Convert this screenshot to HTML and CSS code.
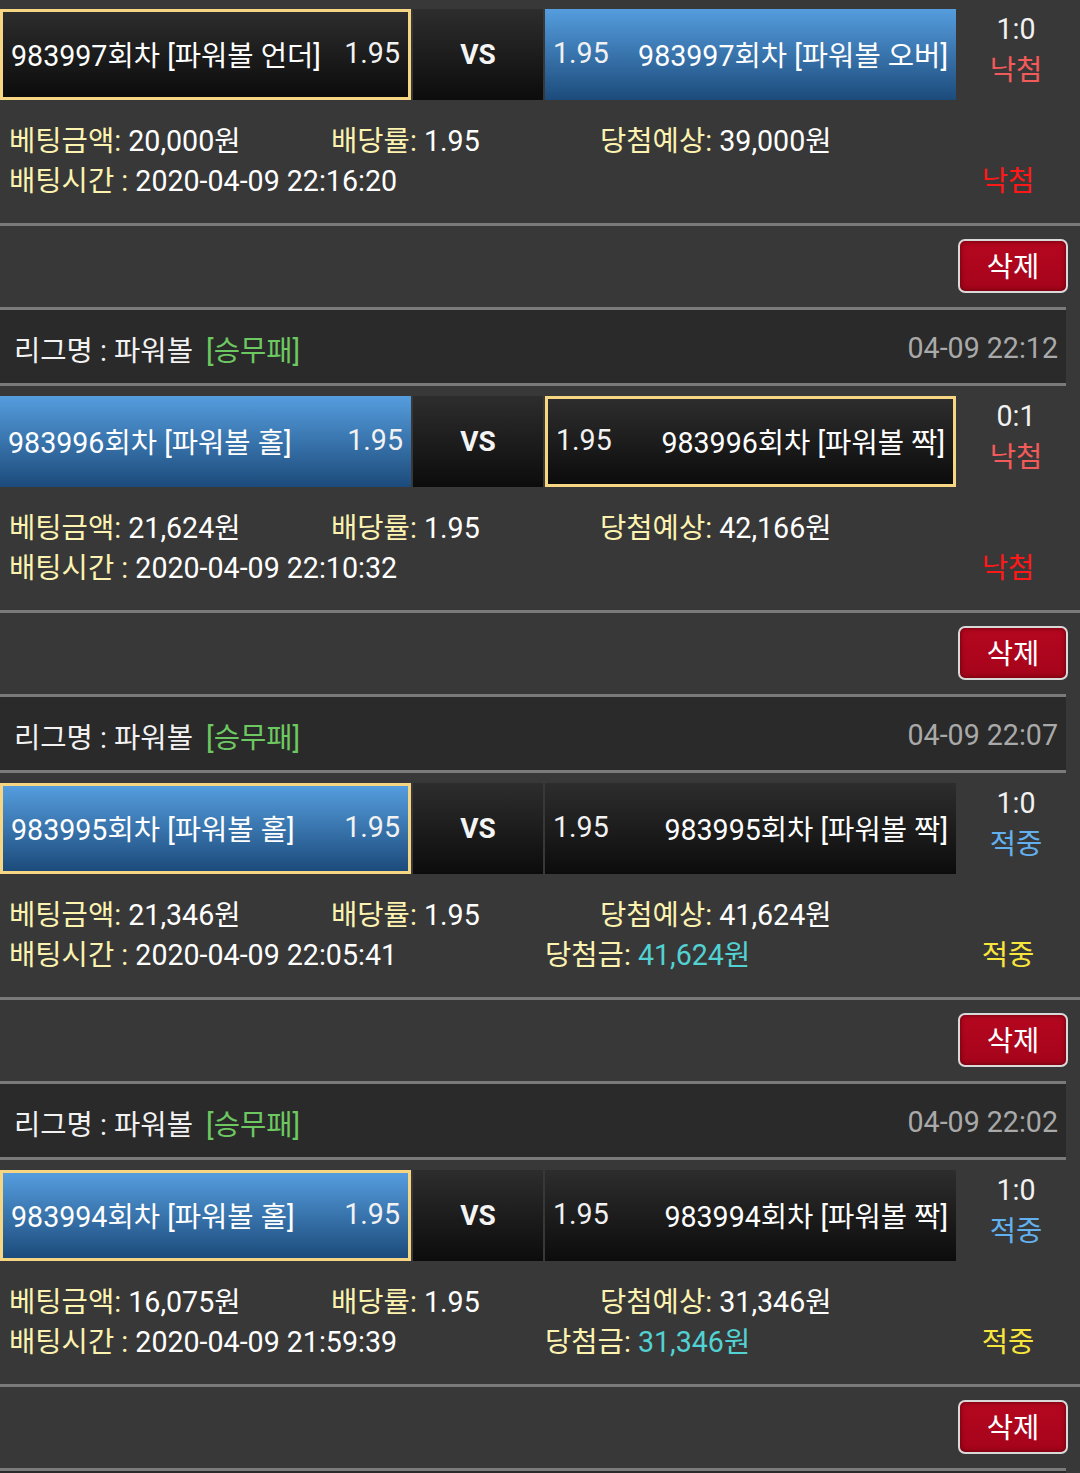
FILE: index.html
```html
<!DOCTYPE html>
<html lang="ko">
<head>
<meta charset="utf-8">
<title>베팅내역</title>
<link rel="stylesheet" href="styles.css">
</head>
<body>
<div class="page">

  <section class="block">
    <div class="bet">
      <div class="pick black selected"><span class="name">983997회차 [파워볼 언더]</span><span class="odds">1.95</span></div>
      <div class="vs">VS</div>
      <div class="pick blue"><span class="odds">1.95</span><span class="name">983997회차 [파워볼 오버]</span></div>
      <div class="score"><span>1:0</span><span class="lose">낙첨</span></div>
    </div>
    <div class="info">
      <div class="line1">
        <span><em>베팅금액:</em> 20,000원</span>
        <span><em>배당률:</em> 1.95</span>
        <span><em>당첨예상:</em> 39,000원</span>
      </div>
      <div class="line2">
        <span><em>배팅시간 :</em> 2020-04-09 22:16:20</span>
        <span></span>
        <span class="result lose-strong">낙첨</span>
      </div>
    </div>
    <div class="sep"></div>
    <div class="actions"><button class="del">삭제</button></div>
    <div class="league"><span>리그명 : 파워볼 <b>[승무패]</b></span><span class="time">04-09 22:12</span></div>
  </section>

  <section class="block">
    <div class="bet">
      <div class="pick blue"><span class="name">983996회차 [파워볼 홀]</span><span class="odds">1.95</span></div>
      <div class="vs">VS</div>
      <div class="pick black selected"><span class="odds">1.95</span><span class="name">983996회차 [파워볼 짝]</span></div>
      <div class="score"><span>0:1</span><span class="lose">낙첨</span></div>
    </div>
    <div class="info">
      <div class="line1">
        <span><em>베팅금액:</em> 21,624원</span>
        <span><em>배당률:</em> 1.95</span>
        <span><em>당첨예상:</em> 42,166원</span>
      </div>
      <div class="line2">
        <span><em>배팅시간 :</em> 2020-04-09 22:10:32</span>
        <span></span>
        <span class="result lose-strong">낙첨</span>
      </div>
    </div>
    <div class="sep"></div>
    <div class="actions"><button class="del">삭제</button></div>
    <div class="league"><span>리그명 : 파워볼 <b>[승무패]</b></span><span class="time">04-09 22:07</span></div>
  </section>

  <section class="block">
    <div class="bet">
      <div class="pick blue selected"><span class="name">983995회차 [파워볼 홀]</span><span class="odds">1.95</span></div>
      <div class="vs">VS</div>
      <div class="pick black"><span class="odds">1.95</span><span class="name">983995회차 [파워볼 짝]</span></div>
      <div class="score"><span>1:0</span><span class="win">적중</span></div>
    </div>
    <div class="info">
      <div class="line1">
        <span><em>베팅금액:</em> 21,346원</span>
        <span><em>배당률:</em> 1.95</span>
        <span><em>당첨예상:</em> 41,624원</span>
      </div>
      <div class="line2">
        <span><em>배팅시간 :</em> 2020-04-09 22:05:41</span>
        <span><em>당첨금:</em> <i>41,624원</i></span>
        <span class="result win-strong">적중</span>
      </div>
    </div>
    <div class="sep"></div>
    <div class="actions"><button class="del">삭제</button></div>
    <div class="league"><span>리그명 : 파워볼 <b>[승무패]</b></span><span class="time">04-09 22:02</span></div>
  </section>

  <section class="block">
    <div class="bet">
      <div class="pick blue selected"><span class="name">983994회차 [파워볼 홀]</span><span class="odds">1.95</span></div>
      <div class="vs">VS</div>
      <div class="pick black"><span class="odds">1.95</span><span class="name">983994회차 [파워볼 짝]</span></div>
      <div class="score"><span>1:0</span><span class="win">적중</span></div>
    </div>
    <div class="info">
      <div class="line1">
        <span><em>베팅금액:</em> 16,075원</span>
        <span><em>배당률:</em> 1.95</span>
        <span><em>당첨예상:</em> 31,346원</span>
      </div>
      <div class="line2">
        <span><em>배팅시간 :</em> 2020-04-09 21:59:39</span>
        <span><em>당첨금:</em> <i>31,346원</i></span>
        <span class="result win-strong">적중</span>
      </div>
    </div>
    <div class="sep"></div>
    <div class="actions"><button class="del">삭제</button></div>
    <div class="league empty"></div>
  </section>

</div>
</body>
</html>
```

FILE: styles.css
```css
html, body {
  margin: 0;
  padding: 0;
  background: #383838;
}

body {
  font-family: "Roboto", "Noto Sans CJK KR", sans-serif;
  font-size: 28.6px;
  color: #ffffff;
  overflow: hidden;
}

.page {
  padding-top: 9px;
}

.block {
  display: flex;
  flex-direction: column;
}

/* bet row */
.bet {
  display: grid;
  grid-template-columns: 411px 130px 411px 124px;
  column-gap: 2px;
  height: 91px;
}

.pick {
  box-sizing: border-box;
  height: 91px;
  padding: 0 8px 3px;
  display: flex;
  align-items: center;
  justify-content: space-between;
  white-space: nowrap;
  color: #ffffff;
}

.pick.black {
  background: linear-gradient(#2d2d2d, #0c0c0c);
}

.pick.blue {
  background: linear-gradient(#559dde, #1c4b7b);
}

.pick.selected {
  border: 3px solid #f6d683;
}

.odds {
  color: #f2f2f2;
}

.vs {
  background: linear-gradient(#2d2d2d, #0c0c0c);
  display: flex;
  align-items: center;
  justify-content: center;
  font-weight: 700;
  font-size: 28px;
  color: #f4f4f4;
}

.score {
  display: flex;
  flex-direction: column;
  align-items: center;
  line-height: 41px;
  margin-left: -2px;
  padding-right: 6px;
  color: #f2f2f2;
}

.score .lose {
  color: #f35a5a;
}

.score .win {
  color: #63b0ee;
}

/* info */
.info {
  height: 123px;
  box-sizing: border-box;
  padding: 21px 0 22px 9px;
  line-height: 40px;
  white-space: nowrap;
}

.info em {
  font-style: normal;
  color: #fdf3b0;
}

.info i {
  font-style: normal;
  color: #52d2d2;
}

.line1 {
  display: grid;
  grid-template-columns: 322px 269px 1fr;
}

.line2 {
  display: grid;
  grid-template-columns: 536px 1fr 144px;
}

.result {
  text-align: center;
}

.lose-strong {
  color: #ff1818;
}

.win-strong {
  color: #f8e63c;
}

.sep {
  height: 3px;
  background: #7a7a7a;
}

/* actions */
.actions {
  height: 81px;
  box-sizing: border-box;
  padding: 13px 12px 0 0;
  display: flex;
  justify-content: flex-end;
  align-items: flex-start;
}

.del {
  width: 110px;
  height: 54px;
  box-sizing: border-box;
  border: 2px solid #d9d9d9;
  border-radius: 7px;
  background: linear-gradient(#b5071f, #a5041b);
  box-shadow: inset 0 0 5px rgba(60, 0, 0, 0.7);
  color: #ffffff;
  font-family: "Roboto", "Noto Sans CJK KR", sans-serif;
  font-size: 28.6px;
  padding: 0 0 3px;
  cursor: pointer;
}

/* league header */
.league {
  width: 1066px;
  height: 79px;
  box-sizing: border-box;
  border-top: 3px solid #7a7a7a;
  border-bottom: 3px solid #7a7a7a;
  background: #2a2a2a;
  margin-bottom: 10px;
  display: flex;
  align-items: center;
  justify-content: space-between;
  padding: 3px 8px 0 14px;
  color: #f2f2f2;
  white-space: nowrap;
}

.league b {
  font-weight: 400;
  color: #6dc862;
  margin-left: 6px;
}

.league .time {
  color: #a9a9a9;
}
```
